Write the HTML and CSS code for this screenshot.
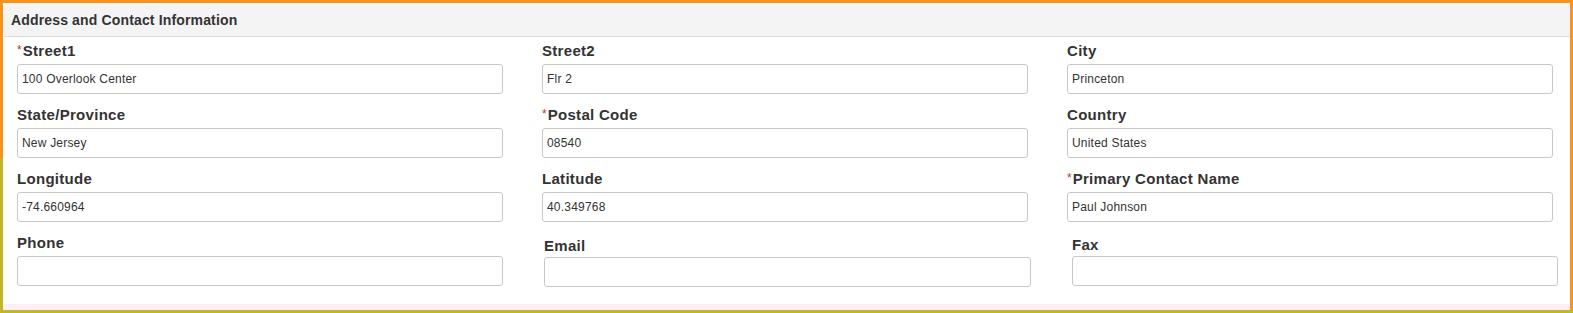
FILE: index.html
```html
<!DOCTYPE html>
<html lang="en">
<head>
<meta charset="utf-8">
<title>Address and Contact Information</title>
<link rel="stylesheet" href="styles.css">
</head>
<body>
<div class="frame">
  <section class="panel">
    <header class="panel-head">Address and Contact Information</header>
    <div class="grid">
      <div class="field">
        <label class="lbl"><span class="req">*</span>Street1</label>
        <div class="input">100 Overlook Center</div>
      </div>
      <div class="field">
        <label class="lbl">Street2</label>
        <div class="input">Flr 2</div>
      </div>
      <div class="field">
        <label class="lbl">City</label>
        <div class="input">Princeton</div>
      </div>

      <div class="field">
        <label class="lbl">State/Province</label>
        <div class="input">New Jersey</div>
      </div>
      <div class="field">
        <label class="lbl"><span class="req">*</span>Postal Code</label>
        <div class="input">08540</div>
      </div>
      <div class="field">
        <label class="lbl">Country</label>
        <div class="input">United States</div>
      </div>

      <div class="field">
        <label class="lbl">Longitude</label>
        <div class="input">-74.660964</div>
      </div>
      <div class="field">
        <label class="lbl">Latitude</label>
        <div class="input">40.349768</div>
      </div>
      <div class="field">
        <label class="lbl"><span class="req">*</span>Primary Contact Name</label>
        <div class="input">Paul Johnson</div>
      </div>

      <div class="field field-phone">
        <label class="lbl">Phone</label>
        <div class="input"></div>
      </div>
      <div class="field field-email">
        <label class="lbl">Email</label>
        <div class="input"></div>
      </div>
      <div class="field field-fax">
        <label class="lbl">Fax</label>
        <div class="input"></div>
      </div>
    </div>
  </section>
</div>
</body>
</html>
```

FILE: styles.css
```css
html, body {
  margin: 0;
  padding: 0;
  background: #fff;
}

body {
  font-family: "Liberation Sans", Arial, sans-serif;
  color: #333;
}

.frame {
  box-sizing: border-box;
  width: 1573px;
  height: 313px;
  padding: 3px 0 3px 3px;
  background: linear-gradient(to bottom, #f7941e 0, #f7941e 158px, #c4b62b 158px, #c4b62b 100%);
}

.panel {
  box-sizing: border-box;
  height: 100%;
  border-right: 3px solid #f7941e;
  background: linear-gradient(to bottom, #fff 0, #fff calc(100% - 6px), #fdf0f7 calc(100% - 6px), #fdf0f7 100%);
  display: flex;
  flex-direction: column;
}

.panel-head {
  height: 33px;
  line-height: 35px;
  padding-left: 7px;
  margin-left: 1px;
  background: #f4f4f4;
  border-bottom: 1px solid #dcdcdc;
  font-size: 14px;
  font-weight: bold;
  letter-spacing: 0.15px;
  color: #333;
}

.grid {
  display: grid;
  grid-template-columns: repeat(3, 486px);
  column-gap: 39px;
  row-gap: 12px;
  padding: 5px 0 0 14px;
}

.field {
  display: flex;
  flex-direction: column;
}

.lbl {
  display: block;
  height: 18px;
  line-height: 18px;
  margin-bottom: 4px;
  font-size: 15px;
  font-weight: bold;
  letter-spacing: 0.3px;
  color: #333;
  white-space: nowrap;
}

.req {
  color: #c9302c;
  font-size: 12px;
  font-weight: normal;
  letter-spacing: 0;
  vertical-align: 2px;
  line-height: 1;
  margin-right: 1px;
}

.input {
  box-sizing: border-box;
  height: 30px;
  line-height: 28px;
  padding: 0 4px;
  border: 1px solid #c8c8c8;
  border-radius: 3px;
  background: #fff;
  font-size: 12px;
  letter-spacing: 0.2px;
  color: #333;
}

.field-email {
  width: 487px;
  margin-left: 2px;
}

.field-email .lbl {
  margin-top: 3px;
  margin-bottom: 2px;
}

.field-fax {
  width: 486px;
  margin-left: 5px;
}

.field-fax .lbl {
  margin-top: 2px;
  margin-bottom: 2px;
}
```
